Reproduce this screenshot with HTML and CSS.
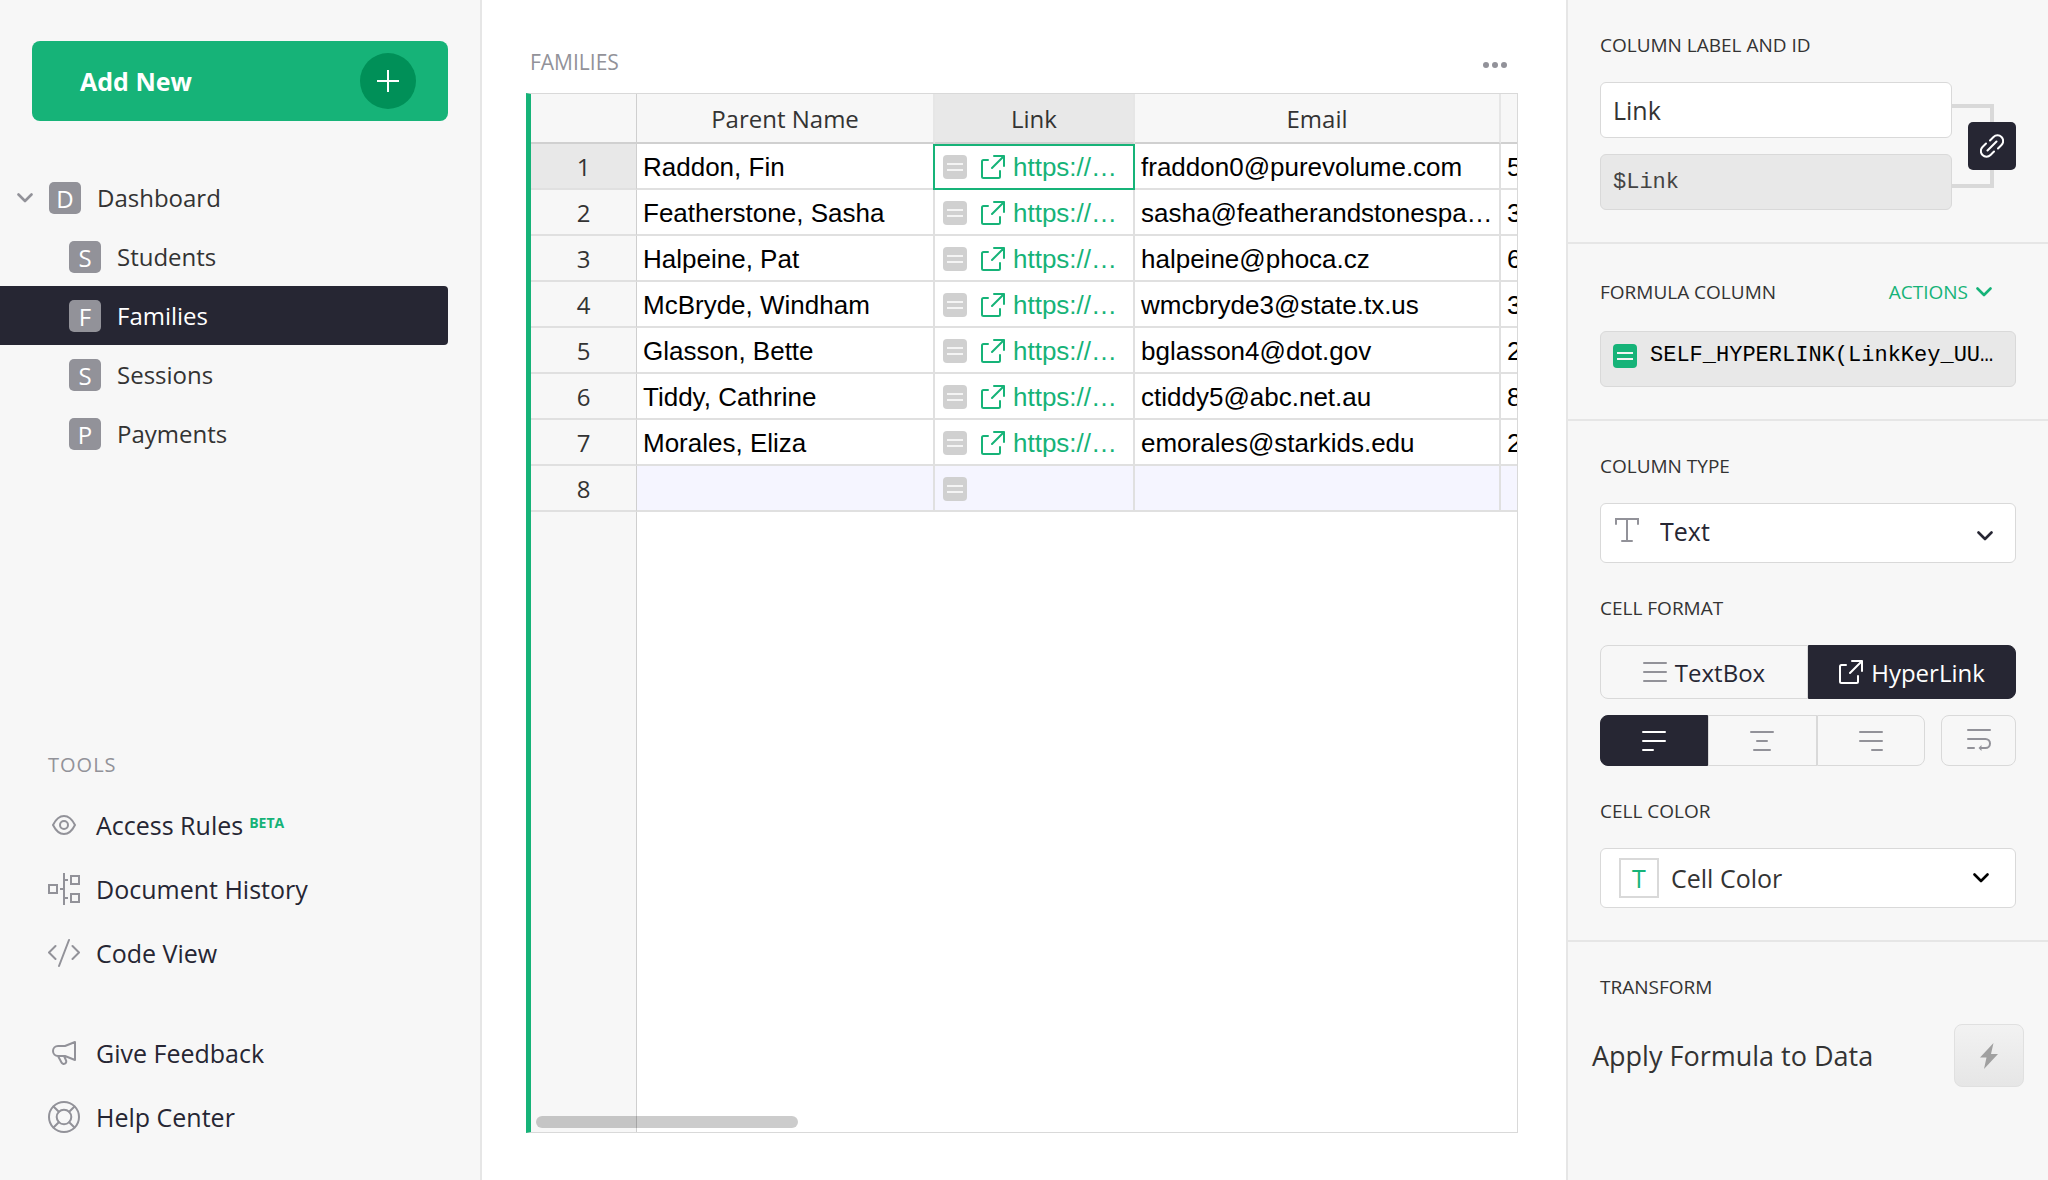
FILE: index.html
```html
<!DOCTYPE html>
<html lang="en">
<head>
<meta charset="utf-8">
<meta name="viewport" content="width=device-width, initial-scale=1">
<title>Families</title>
<link rel="stylesheet" href="styles.css">
</head>
<body>
<svg class="sprite" aria-hidden="true">
  <symbol id="i-chevron" viewBox="0 0 16 10"><path d="M1.500 1.500 8 8l6.500-6.500" fill="none" stroke="currentColor" stroke-width="2.600" stroke-linecap="round" stroke-linejoin="round"/></symbol>
  <symbol id="i-formula" viewBox="0 0 24 24"><rect width="24" height="24" rx="4" fill="currentColor"/><path d="M4 9h16M4 15h16" stroke="#f4f4f4" stroke-width="2"/></symbol>
  <symbol id="i-open" viewBox="0 0 24 24"><g fill="none" stroke="currentColor" stroke-width="2" stroke-linecap="round" stroke-linejoin="round"><path d="M7 5H2.500A1.500 1.500 0 0 0 1 6.500v15A1.500 1.500 0 0 0 2.500 23h15a1.500 1.500 0 0 0 1.500-1.500V16"/><path d="M11 13 23 1M13 1h10v10"/></g></symbol>
</svg>
<div class="app">
  <aside class="sidebar">
    <button class="add-new" type="button">Add New
      <span class="add-new-plus"><svg width="22" height="22" viewBox="0 0 22 22"><path d="M11 0v22M0 11h22" stroke="#fff" stroke-width="2"/></svg></span>
    </button>
    <nav class="pages" aria-label="Pages">
      <a class="page" href="#dashboard"><svg class="page-arrow" width="16" height="10"><use href="#i-chevron"/></svg><span class="badge">D</span>Dashboard</a>
      <a class="page child" href="#students"><span class="badge">S</span>Students</a>
      <a class="page child selected" href="#families" aria-current="page"><span class="badge">F</span>Families</a>
      <a class="page child" href="#sessions"><span class="badge">S</span>Sessions</a>
      <a class="page child" href="#payments"><span class="badge">P</span>Payments</a>
    </nav>
    <nav class="tools" aria-label="Tools">
      <h2 class="tools-title">TOOLS</h2>
      <a class="tool" href="#access"><svg width="32" height="32" viewBox="0 0 32 32"><g class="line"><path d="M5 16C8 10 12 7 16 7s8 3 11 9c-3 6-7 9-11 9S8 22 5 16z"/><circle cx="16" cy="16" r="4"/></g></svg>Access Rules<sup class="beta">BETA</sup></a>
      <a class="tool" href="#history"><svg width="32" height="32" viewBox="0 0 32 32"><g class="line square"><path d="M1 12h8v8H1zM23 3h8v8h-8zM23 21h8v8h-8zM16 0v32M12 16h4M16 7h4M16 25h4"/></g></svg>Document History</a>
      <a class="tool" href="#code"><svg width="32" height="32" viewBox="0 0 32 32"><g class="line"><path d="M7.500 9 1 15.500 7.500 22M24.500 9l6.500 6.500-6.500 6.500M21 3 11 29"/></g></svg>Code View</a>
      <a class="tool apart" href="#feedback"><svg width="32" height="32" viewBox="0 0 32 32"><g class="line"><path d="M27 5v18l-10-4H10a5 5 0 0 1 0-10h7zM10 19l3.500 6.500a2.500 2.500 0 0 0 4.500-2.300L16 19"/></g></svg>Give Feedback</a>
      <a class="tool" href="#help"><svg width="32" height="32" viewBox="0 0 32 32"><g class="line"><circle cx="16" cy="16" r="15"/><circle cx="16" cy="16" r="7.300"/><path d="M5.500 5.500 10.800 10.800M26.500 5.500 21.200 10.800M5.500 26.500l5.300-5.300M26.500 26.500l-5.300-5.300"/></g></svg>Help Center</a>
    </nav>
  </aside>

  <main class="main">
    <header class="section-head">
      <h1 class="section-title">FAMILIES</h1>
      <button class="dots" type="button" aria-label="Widget options"><svg width="24" height="8" viewBox="0 0 24 8"><g fill="#929299"><circle cx="3" cy="4" r="3"/><circle cx="12" cy="4" r="3"/><circle cx="21" cy="4" r="3"/></g></svg></button>
    </header>
    <div class="grid-view">
      <table class="grid">
        <colgroup><col class="c-num"><col class="c-name"><col class="c-link"><col class="c-email"><col class="c-phone"></colgroup>
        <thead>
          <tr><th></th><th>Parent Name</th><th class="active">Link</th><th>Email</th><th></th></tr>
        </thead>
        <tbody>
          <tr><th class="active">1</th><td>Raddon, Fin</td><td class="cursor"><div class="link-cell"><svg class="fx"><use href="#i-formula"/></svg><a href="#1"><svg><use href="#i-open"/></svg>https://…</a></div></td><td>fraddon0@purevolume.com</td><td>5</td></tr>
          <tr><th>2</th><td>Featherstone, Sasha</td><td><div class="link-cell"><svg class="fx"><use href="#i-formula"/></svg><a href="#2"><svg><use href="#i-open"/></svg>https://…</a></div></td><td>sasha@featherandstonespa…</td><td>3</td></tr>
          <tr><th>3</th><td>Halpeine, Pat</td><td><div class="link-cell"><svg class="fx"><use href="#i-formula"/></svg><a href="#3"><svg><use href="#i-open"/></svg>https://…</a></div></td><td>halpeine@phoca.cz</td><td>6</td></tr>
          <tr><th>4</th><td>McBryde, Windham</td><td><div class="link-cell"><svg class="fx"><use href="#i-formula"/></svg><a href="#4"><svg><use href="#i-open"/></svg>https://…</a></div></td><td>wmcbryde3@state.tx.us</td><td>3</td></tr>
          <tr><th>5</th><td>Glasson, Bette</td><td><div class="link-cell"><svg class="fx"><use href="#i-formula"/></svg><a href="#5"><svg><use href="#i-open"/></svg>https://…</a></div></td><td>bglasson4@dot.gov</td><td>2</td></tr>
          <tr><th>6</th><td>Tiddy, Cathrine</td><td><div class="link-cell"><svg class="fx"><use href="#i-formula"/></svg><a href="#6"><svg><use href="#i-open"/></svg>https://…</a></div></td><td>ctiddy5@abc.net.au</td><td>8</td></tr>
          <tr><th>7</th><td>Morales, Eliza</td><td><div class="link-cell"><svg class="fx"><use href="#i-formula"/></svg><a href="#7"><svg><use href="#i-open"/></svg>https://…</a></div></td><td>emorales@starkids.edu</td><td>2</td></tr>
          <tr class="new-row"><th>8</th><td></td><td><div class="link-cell"><svg class="fx"><use href="#i-formula"/></svg></div></td><td></td><td></td></tr>
        </tbody>
      </table>
      <div class="scrollbar"></div>
    </div>
  </main>

  <aside class="panel">
    <section class="block">
      <h2 class="label"><label for="col-label">COLUMN LABEL AND ID</label></h2>
      <div class="id-row">
        <div class="id-fields">
          <input class="field" id="col-label" type="text" value="Link">
          <input class="field mono" type="text" value="$Link" aria-label="Column ID" readonly>
        </div>
        <div class="bracket">
          <button class="link-btn" type="button" aria-label="Keep label and ID linked"><svg width="24" height="24" viewBox="0 0 24 24"><g fill="none" stroke="#fff" stroke-width="2" stroke-linecap="round" stroke-linejoin="round"><path d="M10 6.500l3.500-3.500a5.600 5.600 0 0 1 8 8L18 14.500M14 17.500 10.500 21a5.600 5.600 0 0 1-8-8L6 9.500M7.500 16.500l9-9"/></g></svg></button>
        </div>
      </div>
    </section>

    <section class="block">
      <div class="label-row">
        <h2 class="label">FORMULA COLUMN</h2>
        <button class="actions" type="button">ACTIONS<svg width="16" height="10"><use href="#i-chevron"/></svg></button>
      </div>
      <button class="formula" type="button"><svg width="24" height="24"><use href="#i-formula"/></svg><code>SELF_HYPERLINK(LinkKey_UU…</code></button>
    </section>

    <section class="block">
      <h2 class="label"><label for="col-type">COLUMN TYPE</label></h2>
      <div class="select-wrap">
        <svg class="type-icon" width="24" height="24" viewBox="0 0 24 24"><path d="M1 6V1h22v5M12 1v22M7 23h10" fill="none" stroke="#929299" stroke-width="2" stroke-linecap="round"/></svg>
        <select class="select" id="col-type"><option>Text</option></select>
        <svg class="select-arrow" width="16" height="10"><use href="#i-chevron"/></svg>
      </div>

      <h2 class="label spaced">CELL FORMAT</h2>
      <div class="format-group">
        <button class="seg" type="button"><svg width="24" height="24" viewBox="0 0 24 24"><path class="bar" d="M1 3h22M1 12h22M1 21h22"/></svg>TextBox</button>
        <button class="seg on" type="button" aria-pressed="true"><svg width="24" height="24"><use href="#i-open"/></svg>HyperLink</button>
      </div>
      <div class="align-row">
        <div class="align-group">
          <button class="seg on" type="button" aria-label="Align left" aria-pressed="true"><svg width="24" height="24" viewBox="0 0 24 24"><path class="bar" d="M1 3h22M1 12h22M1 21h10"/></svg></button>
          <button class="seg" type="button" aria-label="Align center"><svg width="24" height="24" viewBox="0 0 24 24"><path class="bar" d="M1 3h22M7 12h10M4 21h16"/></svg></button>
          <button class="seg" type="button" aria-label="Align right"><svg width="24" height="24" viewBox="0 0 24 24"><path class="bar" d="M1 3h22M1 12h22M13 21h10"/></svg></button>
        </div>
        <button class="seg wrap" type="button" aria-label="Wrap text"><svg width="24" height="24" viewBox="0 0 24 24"><path class="bar" d="M1 1h22M1 10h17.500a4.500 4.500 0 0 1 0 9H14M1 19h6"/><path d="M11.500 19l3-3v6z" fill="#929299"/></svg></button>
      </div>

      <h2 class="label spaced">CELL COLOR</h2>
      <button class="color-btn" type="button"><span class="swatch">T</span>Cell Color<svg width="16" height="10"><use href="#i-chevron"/></svg></button>
    </section>

    <section class="block last">
      <h2 class="label">TRANSFORM</h2>
      <div class="transform-row">
        <span>Apply Formula to Data</span>
        <button class="bolt" type="button" aria-label="Apply formula to data"><svg width="18" height="26" viewBox="0 0 18 26"><path d="M13.500 0 0 14.500h6.500L4 26 18 11h-7z" fill="#a0a0a0"/></svg></button>
      </div>
    </section>
  </aside>
</div>
</body>
</html>
```
FILE: styles.css
```css
* { box-sizing: border-box; }

:root {
  --green: #16b378;
  --dark: #262633;
  --slate: #929299;
  --light: #f7f7f7;
  --border: #d9d9d9;
  --soft-border: #e6e6e6;
}

body {
  margin: 0;
  font-family: "Open Sans", "Noto Sans", sans-serif;
  font-size: 25px;
  color: #333;
  background: #fff;
}

button, input, select {
  font: inherit;
  color: inherit;
  margin: 0;
  padding: 0;
  border: 0;
  background: none;
}

a { color: inherit; text-decoration: none; }
h1, h2 { margin: 0; font-weight: 400; }
svg { display: block; flex: none; }
.sprite { position: absolute; width: 0; height: 0; }

.app { display: flex; min-height: 100vh; }

/* Left panel */
.sidebar {
  flex: 0 0 482px;
  display: flex;
  flex-direction: column;
  padding: 41px 0 31px;
  background: var(--light);
  border-right: 2px solid var(--soft-border);
}

.add-new {
  display: flex;
  align-items: center;
  justify-content: space-between;
  height: 80px;
  margin: 0 32px;
  padding: 0 32px 0 48px;
  border-radius: 8px;
  background: var(--green);
  color: #fff;
  font-weight: 700;
}

.add-new-plus {
  display: grid;
  place-items: center;
  width: 56px;
  height: 56px;
  border-radius: 50%;
  background: #009058;
}

.pages { margin-top: 47px; font-size: 24px; }

.page {
  display: flex;
  align-items: center;
  height: 59px;
  margin-right: 32px;
  padding-left: 17px;
}

.page.child { padding-left: 69px; }
.page.selected { background: var(--dark); color: #fff; border-radius: 0 4px 4px 0; }
.page-arrow { margin-right: 16px; color: var(--slate); }

.badge {
  display: grid;
  place-items: center;
  width: 32px;
  height: 32px;
  margin-right: 16px;
  border-radius: 5px;
  background: var(--slate);
  color: #fff;
  line-height: 34px;
}

.tools { margin-top: auto; color: var(--dark); }

.tools-title {
  height: 28px;
  margin-bottom: 14px;
  padding-left: 48px;
  font-size: 20px;
  line-height: 28px;
  letter-spacing: 1px;
  color: var(--slate);
}

.tool {
  display: flex;
  align-items: center;
  height: 64px;
  padding-left: 48px;
}

.tool svg { margin-right: 16px; }
.tool.apart { margin-top: 36px; }
.line { fill: none; stroke: var(--slate); stroke-width: 2; stroke-linecap: round; stroke-linejoin: round; }
.line.square { stroke-linecap: butt; stroke-linejoin: miter; }

.beta {
  align-self: flex-start;
  margin: 16px 0 0 6px;
  font-size: 14px;
  line-height: 28px;
  font-weight: 700;
  color: var(--green);
}

/* Table widget */
.main {
  flex: 1;
  min-width: 0;
  display: flex;
  flex-direction: column;
  padding: 32px 48px 47px 44px;
}

.section-head {
  display: flex;
  align-items: center;
  justify-content: space-between;
  height: 61px;
  padding: 0 11px 0 4px;
}

.section-title {
  height: 61px;
  font-size: 21px;
  line-height: 60px;
  color: var(--slate);
}

.dots { padding: 6px 0 2px; }

.grid-view {
  position: relative;
  flex: 1;
  overflow: hidden;
  border: 1px solid var(--border);
  border-left: 5px solid var(--green);
  background: linear-gradient(to right, var(--light) 105px, #cfcfcf 105px, #cfcfcf 106px, #fff 106px);
}

.grid {
  width: 1170px;
  table-layout: fixed;
  border-collapse: separate;
  border-spacing: 0;
  font-family: "Liberation Sans", Arial, sans-serif;
  font-size: 26px;
  line-height: 40px;
  color: #000;
}

.c-num { width: 106px; }
.c-name { width: 298px; }
.c-link { width: 200px; }
.c-email { width: 366px; }
.c-phone { width: 200px; }

.grid th {
  padding: 2px 0 0;
  font-family: "Open Sans", "Noto Sans", sans-serif;
  font-size: 24px;
  font-weight: 400;
  color: #333;
  background: var(--light);
  border-right: 2px solid var(--soft-border);
  border-bottom: 2px solid #e0e0e0;
}

.grid thead th { height: 50px; border-bottom-color: #d0d0d0; }
.grid tbody th, .grid thead th:first-child { border-right: 1px solid #cfcfcf; }
.grid th.active { background: #e8e8e8; }

.grid td {
  height: 46px;
  padding: 3px 6px 1px;
  background: #fff;
  white-space: nowrap;
  overflow: hidden;
  border-right: 2px solid #e0e0e0;
  border-bottom: 2px solid #e0e0e0;
}

.grid tbody th { height: 46px; }
.grid .new-row td { background: #f5f5ff; }
.grid td.cursor { border-color: var(--green); box-shadow: inset 0 2px var(--green), -2px 0 var(--green); position: relative; }

.link-cell { display: flex; align-items: center; height: 40px; padding-left: 2px; }
.link-cell svg { width: 24px; height: 24px; }
.link-cell .fx { color: #d0d0d0; margin-right: 14px; }
.link-cell a { display: flex; align-items: center; gap: 8px; color: var(--green); }

.scrollbar {
  position: absolute;
  left: 5px;
  bottom: 4px;
  width: 262px;
  height: 12px;
  border-radius: 6px;
  background: rgba(0, 0, 0, 0.2);
}

/* Right panel */
.panel {
  flex: 0 0 482px;
  background: var(--light);
  border-left: 2px solid var(--soft-border);
}

.block { padding: 34px 32px 32px; border-bottom: 2px solid var(--soft-border); }
.block.last { border-bottom: 0; }

.label { margin-bottom: 26px; font-size: 19px; line-height: 22px; }
.label.spaced { margin-top: 34px; }

.id-row { display: flex; }
.id-fields { flex: 1; min-width: 0; display: grid; gap: 16px; }

.field {
  width: 100%;
  height: 56px;
  padding: 0 12px;
  border: 1px solid var(--border);
  border-radius: 6px;
  background: #fff;
}

.mono { background: #e8e8e8; font-family: "Liberation Mono", monospace; font-size: 22px; color: #444; }

.bracket {
  position: relative;
  flex: 0 0 64px;
  display: flex;
  align-items: center;
  justify-content: flex-end;
}

.bracket::before {
  content: "";
  position: absolute;
  inset: 22px 22px 22px 0;
  border: 4px solid var(--border);
  border-left: 0;
}

.link-btn {
  position: relative;
  display: grid;
  place-items: center;
  width: 48px;
  height: 48px;
  border-radius: 5px;
  background: var(--dark);
}

.label-row { display: flex; align-items: center; justify-content: space-between; height: 27px; margin-bottom: 26px; padding-right: 24px; }
.label-row .label { margin: 0; }
.actions { display: flex; align-items: center; gap: 8px; font-size: 19px; line-height: 22px; color: var(--green); }

.formula {
  display: flex;
  gap: 13px;
  width: 100%;
  height: 56px;
  padding: 12px;
  border: 1px solid var(--border);
  border-radius: 6px;
  background: #e8e8e8;
  color: #000;
}

.formula svg { color: var(--green); }
.formula code { font-family: "Liberation Mono", monospace; font-size: 22px; line-height: 24px; white-space: nowrap; }

.select-wrap { position: relative; color: var(--dark); }

.select {
  appearance: none;
  display: block;
  width: 100%;
  height: 60px;
  padding: 0 48px 4px 59px;
  border: 1px solid var(--border);
  border-radius: 6px;
  background: #fff;
}

.type-icon { position: absolute; left: 15px; top: 15px; }
.select-arrow { position: absolute; right: 23px; top: 28px; }

.format-group { display: flex; height: 54px; font-size: 24px; color: var(--dark); }

.seg {
  flex: 1;
  display: flex;
  align-items: center;
  justify-content: center;
  gap: 8px;
  border: 1px solid var(--border);
}

.seg:first-child { border-radius: 8px 0 0 8px; }
.seg:last-child { border-radius: 0 8px 8px 0; }
.seg.on { background: var(--dark); border-color: var(--dark); color: #fff; }

.align-row { display: flex; gap: 16px; height: 51px; margin-top: 16px; }
.align-group { flex: 1; display: flex; }
.bar { fill: none; stroke: var(--slate); stroke-width: 2; stroke-linecap: round; }
.on .bar { stroke: #fff; }
.seg.wrap { flex: 0 0 75px; border-radius: 8px; }

.color-btn {
  display: flex;
  align-items: center;
  width: 100%;
  height: 60px;
  padding: 0 26px 0 18px;
  border: 1px solid var(--border);
  border-radius: 6px;
  background: #fff;
}

.color-btn svg { margin-left: auto; color: #000; }

.swatch {
  display: grid;
  place-items: center;
  width: 40px;
  height: 40px;
  margin-right: 12px;
  border: 2px solid var(--border);
  color: var(--green);
  line-height: 36px;
}

.transform-row {
  display: flex;
  align-items: center;
  justify-content: space-between;
  margin: 0 -8px;
  font-size: 27px;
}

.bolt {
  display: grid;
  place-items: center;
  width: 70px;
  height: 63px;
  border: 1px solid #e0e0e0;
  border-radius: 8px;
  background: linear-gradient(#f2f2f2, #e6e6e6);
}
```
